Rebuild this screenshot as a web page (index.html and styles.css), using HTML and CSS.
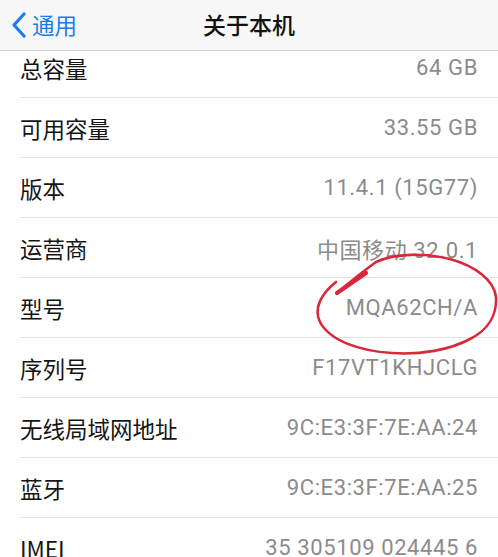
FILE: index.html
```html
<!DOCTYPE html>
<html lang="zh-CN">
  <head>
    <meta charset="UTF-8" />
    <meta name="viewport" content="width=device-width, initial-scale=1.0" />
    <title>关于本机</title>
    <link rel="stylesheet" href="styles.css">
  </head>
  <body>
    <div class="screen">
      <div class="nav">
        <div class="nav-back">
          <svg class="chevron" width="16" height="26" viewBox="0 0 16 26">
            <path d="M13 2 L3 13 L13 24" fill="none" stroke="#1a7cf0" stroke-width="3.2" stroke-linecap="round" stroke-linejoin="round" />
          </svg>
          <span>通用</span>
        </div>
        <div class="nav-title">关于本机</div>
        <div></div>
      </div>

      <div class="list-wrap">
        <div class="list">
          <div class="row"><span class="label">总容量</span><span class="value">64 GB</span></div>
          <div class="row"><span class="label">可用容量</span><span class="value">33.55 GB</span></div>
          <div class="row"><span class="label">版本</span><span class="value">11.4.1 (15G77)</span></div>
          <div class="row"><span class="label">运营商</span><span class="value">中国移动 32.0.1</span></div>
          <div class="row"><span class="label">型号</span><span class="value">MQA62CH/A</span></div>
          <div class="row"><span class="label">序列号</span><span class="value">F17VT1KHJCLG</span></div>
          <div class="row"><span class="label">无线局域网地址</span><span class="value">9C:E3:3F:7E:AA:24</span></div>
          <div class="row"><span class="label">蓝牙</span><span class="value">9C:E3:3F:7E:AA:25</span></div>
          <div class="row"><span class="label">IMEI</span><span class="value">35 305109 024445 6</span></div>
        </div>
      </div>

      <!-- hand-drawn annotation round the model number -->
      <svg class="mark" width="498" height="557" viewBox="0 0 498 557">
        <path d="M337 293 C350 282 362 272 376 262 C395 253 425 253 450 259 C475 266 494 280 496 297 C497 315 488 330 470 339 C450 350 420 355 392 353 C360 351 330 341 320 322 C313 308 322 293 336 282"
          fill="none" stroke="#d8283a" stroke-width="2.6" stroke-linecap="round" />
        <path d="M337 293 L366 273" fill="none" stroke="#d8283a" stroke-width="4.2" stroke-linecap="round" />
      </svg>
    </div>
  </body>
</html>
```

FILE: styles.css
```css
body {
  margin: 0;
  background: #ffffff;
  font-family: "Noto Sans CJK SC", sans-serif;
}
.screen {
  position: relative;
  width: 498px;
  height: 557px;
  overflow: hidden;
}
.nav {
  position: relative;
  z-index: 2;
  height: 50px;
  display: grid;
  grid-template-columns: 1fr auto 1fr;
  align-items: center;
  background: #f7f7f7;
  border-bottom: 1px solid #d2d2d2;
}
.nav-back {
  display: flex;
  align-items: center;
  gap: 5px;
  padding-left: 11px;
  color: #1a7cf0;
  font-size: 22.5px;
}
.nav-back span {
  margin-top: -2px;
}
.nav-title {
  font-size: 23px;
  font-weight: 500;
  color: #111111;
  margin-top: -2px;
}
.list-wrap {
  height: 506px;
  overflow: hidden;
}
.list {
  margin-top: -13px;
}
.row {
  height: 59px;
  margin-left: 20px;
  padding-right: 20px;
  display: flex;
  align-items: center;
  justify-content: space-between;
  border-bottom: 1px solid #e2e2e2;
}
.label {
  font-size: 22.5px;
  color: #141414;
}
.value {
  font-family: "Roboto", "Noto Sans CJK SC", sans-serif;
  font-size: 22px;
  letter-spacing: 0.6px;
  color: #8b8b8b;
}
.mark {
  position: absolute;
  left: 0;
  top: 0;
  pointer-events: none;
}
```
